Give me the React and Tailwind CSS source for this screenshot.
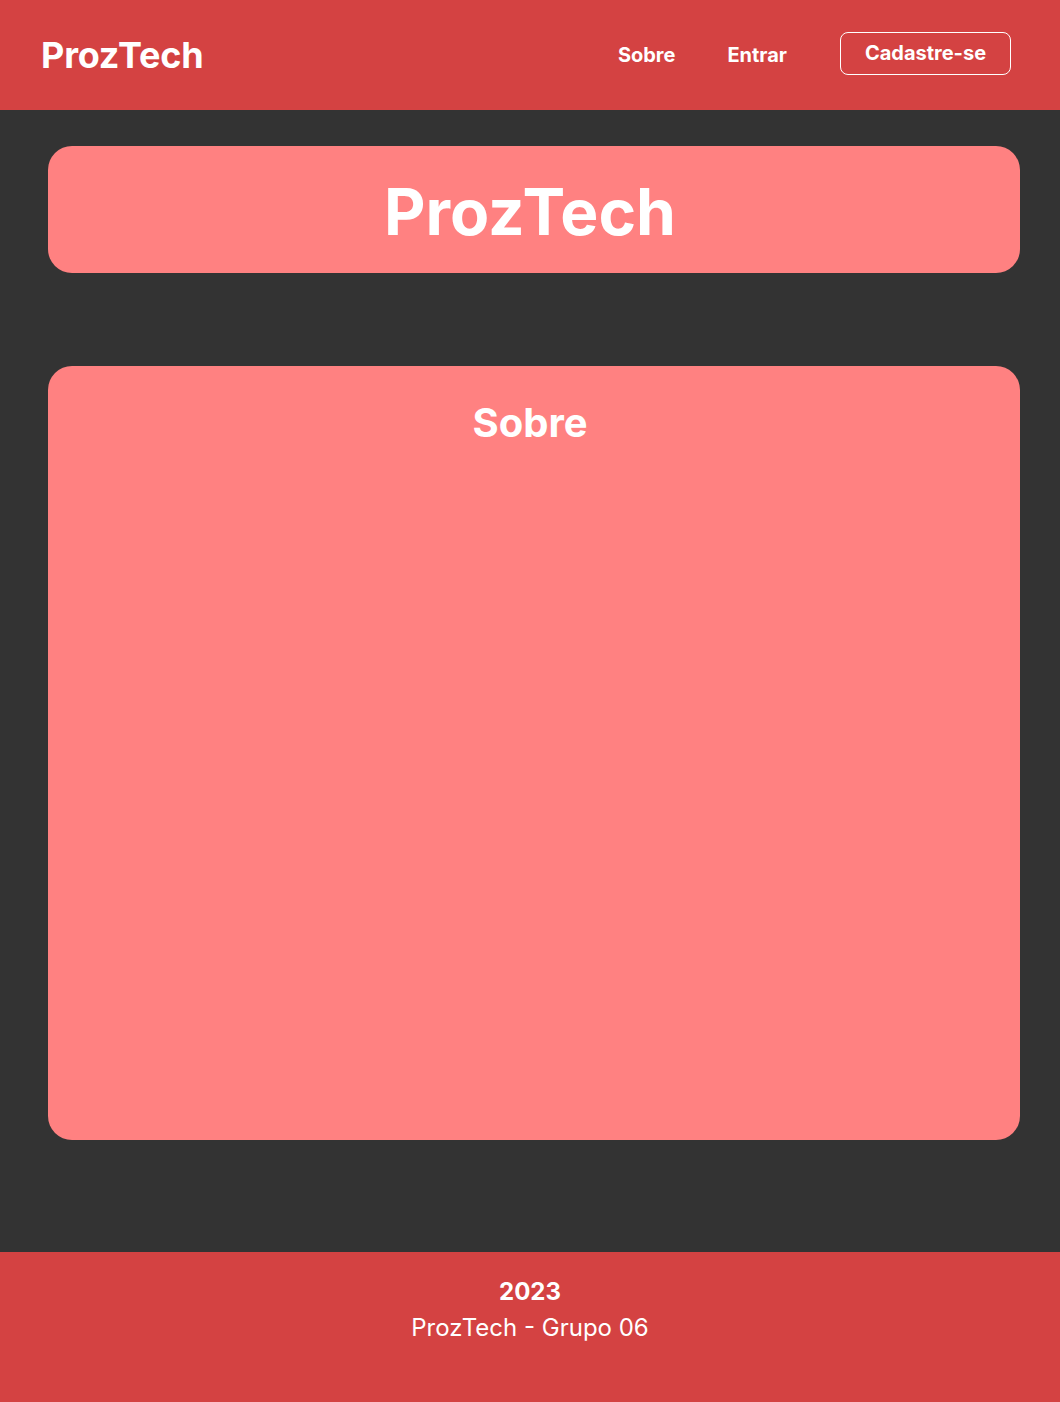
export default function App() {
  return (
    <div className="min-h-[1402px] flex flex-col bg-[#333333] font-['Inter',sans-serif] text-white">
      <header className="h-[110px] bg-[#d44242] flex items-center justify-between pl-[41px] pr-[49px]">
        <h1 className="text-[36px] font-bold tracking-[-0.2px] leading-[44px] mb-[1px]">ProzTech</h1>
        <nav className="flex items-center">
          <a className="text-[20px] font-bold mr-[52px]">Sobre</a>
          <a className="text-[20px] font-bold mr-[53px]">Entrar</a>
          <button className="w-[171px] h-[43px] mb-[4px] border border-white rounded-[8px] text-[20px] font-bold flex items-center justify-center">
            Cadastre-se
          </button>
        </nav>
      </header>

      <main className="flex-1 pl-[48px] pr-[40px] pt-[36px] pb-[112px] flex flex-col">
        <section className="h-[127px] bg-[#ff8181] rounded-[24px] pr-[8px] flex items-center justify-center">
          <h2 className="text-[64px] font-bold leading-none pt-[4px]">ProzTech</h2>
        </section>
        <section className="mt-[93px] h-[774px] bg-[#ff8181] rounded-[24px] pr-[8px] flex flex-col items-center pt-[35px]">
          <h3 className="text-[40px] font-bold leading-[44px]">Sobre</h3>
        </section>
      </main>

      <footer className="h-[150px] bg-[#d44242] flex flex-col items-center pt-[24px]">
        <p className="text-[24px] font-bold leading-[32px]">2023</p>
        <p className="text-[24px] leading-[40px]">ProzTech - Grupo 06</p>
      </footer>
    </div>
  )
}
